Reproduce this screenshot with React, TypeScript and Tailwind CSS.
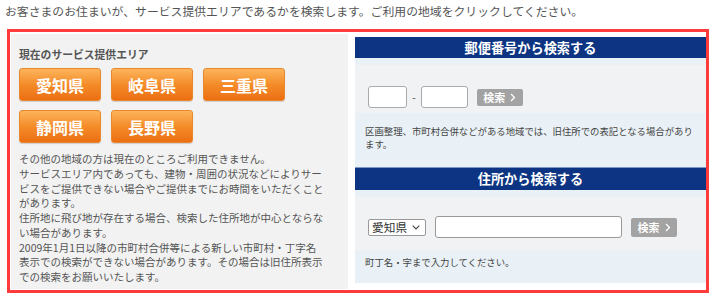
import React from "react";

const Chevron = ({ className = "" }: { className?: string }) => (
  <svg width="6" height="9" viewBox="0 0 6 9" className={className}>
    <path d="M1 1 L4.5 4.5 L1 8" fill="none" stroke="white" strokeWidth="1.3" />
  </svg>
);

const Pref = ({ name }: { name: string }) => (
  <div className="w-[82px] h-[33px] rounded-[3px] border border-[#e9892c] bg-linear-to-b from-[#fcb45a] via-[#f48c28] to-[#ec6f12] flex items-center justify-center text-white font-bold text-[16px] leading-none shadow-[0_1px_1px_rgba(0,0,0,0.15)]">
    {name}
  </div>
);

const GrayBtn = ({ h }: { h: string }) => (
  <div className={`w-[46px] ${h} rounded-[2px] bg-[#a3a3a3] flex items-center justify-center gap-[5px] text-white font-bold text-[11px] leading-none`}>
    <span>検索</span>
    <Chevron />
  </div>
);

export default function App() {
  return (
    <div className="w-[710px] h-[297px] bg-white text-[#555] font-['Noto_Sans_CJK_JP',sans-serif]">
      <p className="pl-[5px] pt-[3px] text-[11.85px] leading-[16px] whitespace-nowrap">
        お客さまのお住まいが、サービス提供エリアであるかを検索します。ご利用の地域をクリックしてください。
      </p>
      <div className="ml-[7px] mt-[10px] w-[702px] h-[264px] border-[3px] border-[#ff3b3b] flex items-start">
        <div className="ml-[1px] mt-[2px] w-[337px] h-[255px] bg-[#f2f2f2] pl-[8px] pt-[14px]">
          <div className="text-[10.8px] leading-[12px] font-bold text-[#555]">現在のサービス提供エリア</div>
          <div className="mt-[8px] grid grid-cols-[82px_82px_82px] gap-x-[10px] gap-y-[9px]">
            <Pref name="愛知県" />
            <Pref name="岐阜県" />
            <Pref name="三重県" />
            <Pref name="静岡県" />
            <Pref name="長野県" />
          </div>
          <p className="mt-[9px] text-[10.5px] leading-[14.75px] whitespace-nowrap text-[#555]">
            その他の地域の方は現在のところご利用できません。<br />
            サービスエリア内であっても、建物・周囲の状況などによりサー<br />
            ビスをご提供できない場合やご提供までにお時間をいただくこと<br />
            があります。<br />
            住所地に飛び地が存在する場合、検索した住所地が中心とならな<br />
            い場合があります。<br />
            2009年1月1日以降の市町村合併等による新しい市町村・丁字名<br />
            表示での検索ができない場合があります。その場合は旧住所表示<br />
            での検索をお願いいたします。
          </p>
        </div>
        <div className="ml-[7px] mt-[5px] w-[351px] bg-[#e9f1f6]">
          <div className="h-[21px] bg-[#0c3482] flex items-center justify-center text-white font-bold text-[13.2px] leading-none">
            郵便番号から検索する
          </div>
          <div className="pt-[7px]">
            <div className="bg-[#f1f2f4] pt-[21px] pb-[5px] pl-[13px] flex items-center">
              <div className="w-[39px] h-[22px] bg-white border border-[#aaa] rounded-[3px]" />
              <span className="mx-[5px] text-[11px] leading-none">-</span>
              <div className="w-[47px] h-[22px] bg-white border border-[#aaa] rounded-[3px]" />
              <div className="ml-[9px]">
                <GrayBtn h="h-[17px]" />
              </div>
            </div>
            <p className="pl-[10px] pt-[12px] pb-[16px] text-[9.4px] leading-[13px] whitespace-nowrap text-[#444]">
              区画整理、市町村合併などがある地域では、旧住所での表記となる場合があり<br />
              ます。
            </p>
          </div>
          <div className="h-[23px] bg-[#0c3482] border-t border-[#7d98c4] flex items-center justify-center text-white font-bold text-[13.2px] leading-none">
            住所から検索する
          </div>
          <div className="pt-[7px]">
            <div className="bg-[#f1f2f4] pt-[19px] pb-[12px] pl-[13px] flex items-center">
              <div className="w-[58px] h-[17px] bg-white border border-[#999] rounded-[2px] flex items-center pl-[3px] text-[11.7px] leading-none text-[#333]">
                <span>愛知県</span>
                <svg width="8" height="5" viewBox="0 0 8 5" className="ml-[5px]">
                  <path d="M0.7 0.7 L4 4 L7.3 0.7" fill="none" stroke="#444" strokeWidth="1.1" />
                </svg>
              </div>
              <div className="ml-[9px] w-[187px] h-[22px] bg-white border border-[#999] rounded-[3px]" />
              <div className="ml-[9px]">
                <GrayBtn h="h-[19px]" />
              </div>
            </div>
            <p className="pl-[10px] pt-[6px] pb-[14px] text-[9.4px] leading-[13px] whitespace-nowrap text-[#444]">
              町丁名・字まで入力してください。
            </p>
          </div>
        </div>
      </div>
    </div>
  );
}
